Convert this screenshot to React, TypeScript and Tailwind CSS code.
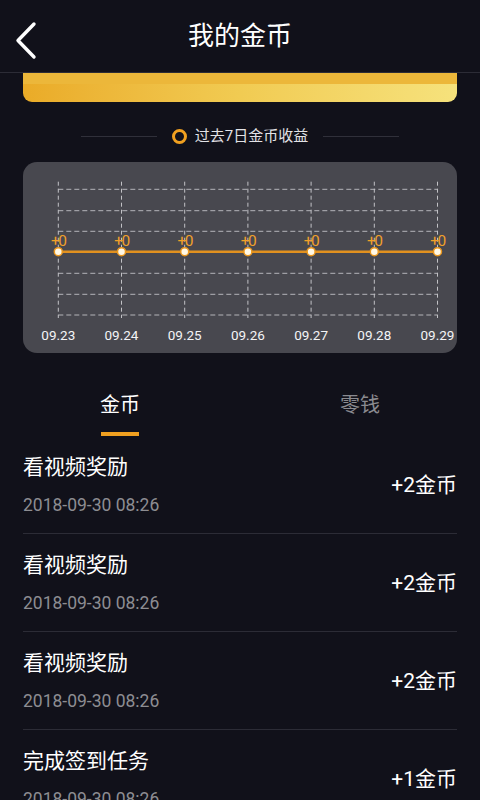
const FONT = { fontFamily: 'Roboto, "Noto Sans CJK SC", sans-serif' };

const DAYS = ["09.23", "09.24", "09.25", "09.26", "09.27", "09.28", "09.29"];
const GRID_Y = [27.3, 48.7, 69.3, 111.3, 132.3, 153];
const LINE_Y = 89.7;
const colX = (i: number) => 35.3 + i * 63.2;

const RECORDS = [
  { title: "看视频奖励", time: "2018-09-30 08:26", amount: "+2金币" },
  { title: "看视频奖励", time: "2018-09-30 08:26", amount: "+2金币" },
  { title: "看视频奖励", time: "2018-09-30 08:26", amount: "+2金币" },
  { title: "完成签到任务", time: "2018-09-30 08:26", amount: "+1金币" },
];

function WeekChart() {
  return (
    <svg viewBox="0 0 434 191" className="block h-full w-full">
      {/* grid */}
      {GRID_Y.map((y) => (
        <line
          key={y}
          x1={colX(0)}
          x2={colX(6)}
          y1={y}
          y2={y}
          stroke="#b4b4b9"
          strokeWidth={1}
          strokeDasharray="5 3"
        />
      ))}
      {DAYS.map((d, i) => (
        <line
          key={d}
          x1={colX(i)}
          x2={colX(i)}
          y1={19.7}
          y2={156}
          stroke="#c2c2c6"
          strokeWidth={1}
          strokeDasharray="4 3"
        />
      ))}

      {/* data line */}
      <line x1={colX(0)} x2={colX(6)} y1={LINE_Y} y2={LINE_Y} stroke="#e2911f" strokeWidth={2.5} />
      {DAYS.map((d, i) => (
        <g key={`p-${d}`}>
          <circle cx={colX(i)} cy={LINE_Y} r={4} fill="#fff8e6" stroke="#e9961d" strokeWidth={1.5} />
          <text
            x={colX(i)}
            y={84}
            textAnchor="middle"
            fill="#f0a02a"
            fontSize={15.5}
            letterSpacing={-1.5}
            style={{ fontFamily: "Roboto, sans-serif" }}
          >
            +0
          </text>
          <text
            x={colX(i)}
            y={177.5}
            textAnchor="middle"
            fill="#f4f4f6"
            fontSize={13.5}
            style={{ fontFamily: "Roboto, sans-serif" }}
          >
            {d}
          </text>
        </g>
      ))}
    </svg>
  );
}

export default function App() {
  return (
    <div className="h-[800px] w-[480px] overflow-hidden bg-[#11111a]" style={FONT}>
      {/* header */}
      <div className="relative flex h-[73px] items-center justify-center border-b border-[#2c2c36]">
        <svg viewBox="0 0 24 40" className="absolute left-[14px] top-[21px] h-[40px] w-[24px]">
          <polyline
            points="20,3 4,19.5 20,36"
            fill="none"
            stroke="#fff"
            strokeWidth={3.4}
            strokeLinecap="round"
            strokeLinejoin="round"
          />
        </svg>
        <span className="text-[26px] leading-none text-white">我的金币</span>
      </div>

      {/* gold card, scrolled under header */}
      <div className="mx-[23px] h-[29px] overflow-hidden rounded-b-[9px] bg-gradient-to-r from-[#eaab27] via-[#f1cb52] to-[#f6e27c]">
        <div className="h-[11px] bg-[#ecb73a]" />
      </div>

      {/* chart title */}
      <div className="mt-[24px] flex h-[20px] items-center justify-center">
        <div className="h-px w-[76px] bg-[#30303a]" />
        <div className="ml-[15px] mr-[8px] h-[15px] w-[15px] rounded-full border-[3.5px] border-[#f0a020]" />
        <span className="text-[15px] leading-none text-[#e2e2e6]">过去7日金币收益</span>
        <div className="ml-[15px] h-px w-[76px] bg-[#30303a]" />
      </div>

      {/* chart */}
      <div className="mx-[23px] mt-[16px] h-[191px] rounded-[14px] bg-[#48484f]">
        <WeekChart />
      </div>

      {/* tabs */}
      <div className="mt-[38px] grid grid-cols-2">
        <div className="flex flex-col items-center">
          <span className="text-[20px] leading-[28px] text-white">金币</span>
          <div className="mt-[13px] h-[4px] w-[38px] bg-[#f0a020]" />
        </div>
        <div className="flex flex-col items-center">
          <span className="text-[20px] leading-[28px] text-[#8a8a8f]">零钱</span>
        </div>
      </div>

      {/* records */}
      <div className="px-[23px]">
        {RECORDS.map((r, i) => (
          <div
            key={i}
            className={`flex items-center justify-between pb-[17px] pt-[18px] ${
              i < RECORDS.length - 1 ? "border-b border-[#2c2c36]" : ""
            }`}
          >
            <div className="flex flex-col">
              <span className="text-[21px] leading-[26px] text-white">{r.title}</span>
              <span className="mt-[14px] text-[17.5px] leading-[22px] text-[#8d8d92]">{r.time}</span>
            </div>
            <span className="text-[21px] leading-[26px] text-white">{r.amount}</span>
          </div>
        ))}
      </div>
    </div>
  );
}
